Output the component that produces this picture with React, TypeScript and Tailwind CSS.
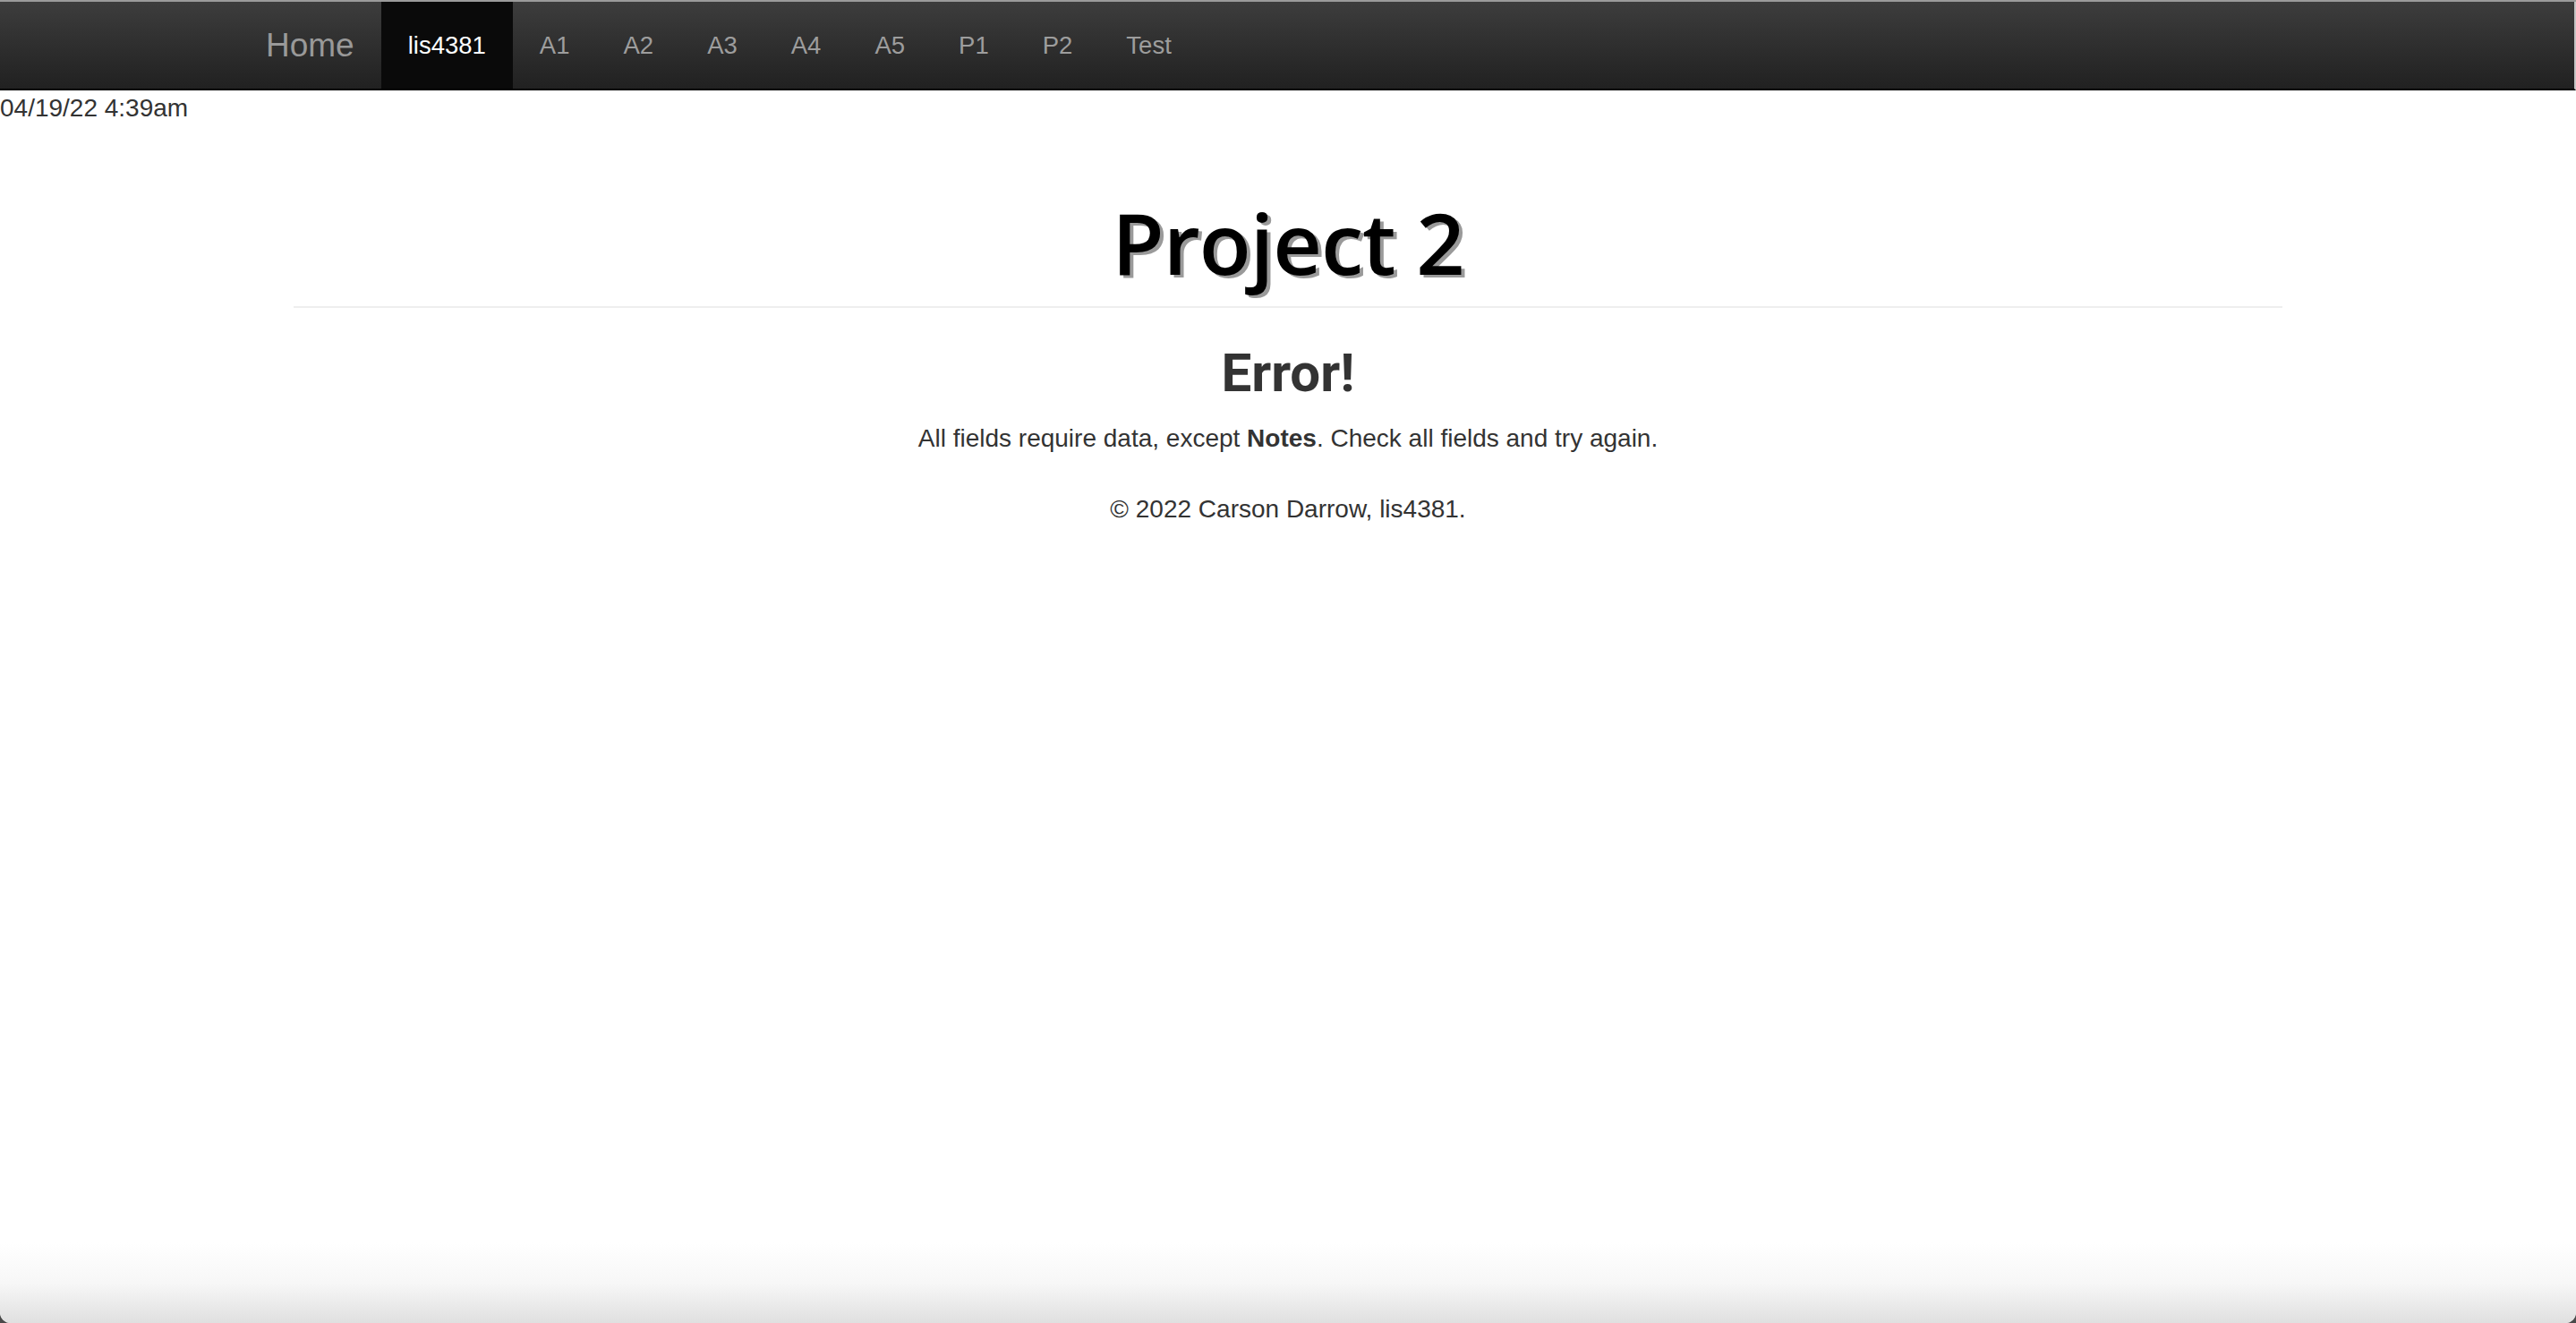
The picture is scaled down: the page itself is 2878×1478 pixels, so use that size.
import React from "react";

const items = ["A1", "A2", "A3", "A4", "A5", "P1", "P2", "Test"];

export default function App() {
  return (
    <div className="h-[1478px] w-full bg-[#4a4a4a] overflow-hidden">
      <div className="flex h-full flex-col bg-white rounded-b-[12px] overflow-hidden font-['Liberation_Sans',Arial,sans-serif]">
        <div className="h-[2px] bg-[#9b9b9b]" />
        <nav className="h-[99px] bg-gradient-to-b from-[#3d3d3d] to-[#212121] border-b-[2px] border-black border-r-2 border-r-[#c4c4c4]">
          <div className="mx-auto flex h-full w-[2342px] items-stretch">
            <a className="flex items-center px-[30px] text-[37px] text-[#999]">Home</a>
            <a className="flex items-center bg-[#0a0a0a] px-[30px] text-[27.5px] text-white">lis4381</a>
            {items.map((t) => (
              <a key={t} className="flex items-center px-[30px] text-[27.5px] text-[#9d9d9d]">
                {t}
              </a>
            ))}
          </div>
        </nav>
        <div className="text-[28px] leading-[40px] text-[#333]">04/19/22 4:39am</div>
        <div className="mx-auto w-[2222px] mt-[74px] pb-[17px] border-b-2 border-[#eee] text-center">
          <h1 className="font-['Open_Sans',sans-serif] font-semibold tracking-[-1px] text-[95px] leading-[110px] text-black [text-shadow:4px_3px_0_#9a9a9a]">
            Project 2
          </h1>
        </div>
        <h2 className="mt-[40px] text-center font-['Roboto',sans-serif] font-bold text-[60px] leading-[66px] text-[#333]">
          Error!
        </h2>
        <p className="mt-[20px] text-center text-[28px] leading-[40px] text-[#333]">
          All fields require data, except <b>Notes</b>. Check all fields and try again.
        </p>
        <p className="mt-[39px] text-center text-[28px] leading-[40px] text-[#333]">
          © 2022 Carson Darrow, lis4381.
        </p>
        <div className="flex-1" />
        <div className="h-[90px] bg-gradient-to-b from-white via-[#f7f7f7] to-[#e0e0e0]" />
      </div>
    </div>
  );
}
